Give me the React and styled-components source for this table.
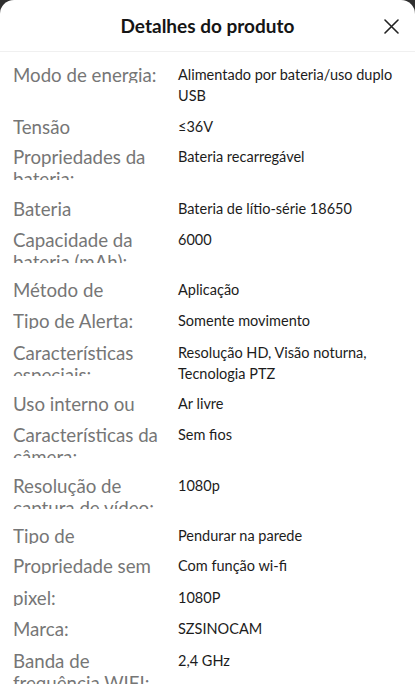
import React from "react";
import styled, { createGlobalStyle } from "styled-components";

const Global = createGlobalStyle`
  html, body { margin: 0; padding: 0; background: #2f2f2f; }
  body { font-family: Lato, "Noto Sans", sans-serif; }
  * { box-sizing: border-box; }
`;

const Sheet = styled.div`
  width: 415px;
  height: 699px;
  background: #fff;
  border-radius: 14px 14px 0 0;
  overflow: hidden;
  display: flex;
  flex-direction: column;
`;

const Header = styled.div`
  height: 52px;
  flex: 0 0 52px;
  display: flex;
  align-items: center;
  justify-content: center;
  position: relative;
  border-bottom: 1px solid #f0f0f0;
`;

const Title = styled.h1`
  margin: 0;
  font-family: Lato, "Noto Sans", sans-serif;
  font-weight: 700;
  font-size: 19px;
  color: #151515;
`;

const Close = styled.button`
  position: absolute;
  right: 16px;
  top: 18px;
  width: 16px;
  height: 16px;
  padding: 0;
  border: 0;
  background: none;
  display: flex;
  align-items: center;
  justify-content: center;
`;

const List = styled.div`
  display: flex;
  flex-direction: column;
  padding: 12px 15px 0 13px;
`;

const Row = styled.div`
  display: flex;
  align-items: flex-start;
  height: ${(p) => p.$h}px;
  flex: 0 0 ${(p) => p.$h}px;
`;

const Label = styled.div`
  flex: 0 0 165px;
  padding-right: 15px;
  font-size: 18.7px;
  line-height: 22px;
  color: #767676;
  max-height: ${(p) => p.$clip}px;
  overflow: hidden;
`;

const Value = styled.div`
  flex: 1;
  font-size: 14.5px;
  line-height: 21px;
  color: #1c1c1c;
`;

const rows = [
  { l: "Modo de energia:", v: "Alimentado por bateria/uso duplo USB", h: 52, clip: 19 },
  { l: "Tensão", v: "≤36V", h: 30, clip: 19 },
  { l: "Propriedades da bateria:", v: "Bateria recarregável", h: 52, clip: 34 },
  { l: "Bateria", v: "Bateria de lítio-série 18650", h: 31, clip: 19 },
  { l: "Capacidade da bateria (mAh):", v: "6000", h: 50, clip: 34 },
  { l: "Método de conexão:", v: "Aplicação", h: 31, clip: 19 },
  { l: "Tipo de Alerta:", v: "Somente movimento", h: 32, clip: 19 },
  { l: "Características especiais:", v: "Resolução HD, Visão noturna, Tecnologia PTZ", h: 51, clip: 34 },
  { l: "Uso interno ou externo:", v: "Ar livre", h: 31, clip: 19 },
  { l: "Características da câmera:", v: "Sem fios", h: 51, clip: 34 },
  { l: "Resolução de captura de vídeo:", v: "1080p", h: 50, clip: 34 },
  { l: "Tipo de montagem:", v: "Pendurar na parede", h: 30, clip: 19 },
  { l: "Propriedade sem fio:", v: "Com função wi-fi", h: 32, clip: 19 },
  { l: "pixel:", v: "1080P", h: 31, clip: 19 },
  { l: "Marca:", v: "SZSINOCAM", h: 32, clip: 19 },
  { l: "Banda de frequência WIFI:", v: "2,4 GHz", h: 52, clip: 34 },
];

export default function App() {
  return (
    <>
      <Global />
      <Sheet>
        <Header>
          <Title>Detalhes do produto</Title>
          <Close aria-label="Fechar">
            <svg width="15" height="15" viewBox="0 0 15 15">
              <path d="M1 1 L14 14 M14 1 L1 14" stroke="#222" strokeWidth="1.6" strokeLinecap="round" />
            </svg>
          </Close>
        </Header>
        <List>
          {rows.map((r) => (
            <Row key={r.l} $h={r.h}>
              <Label $clip={r.clip}>{r.l}</Label>
              <Value>{r.v}</Value>
            </Row>
          ))}
        </List>
      </Sheet>
    </>
  );
}
